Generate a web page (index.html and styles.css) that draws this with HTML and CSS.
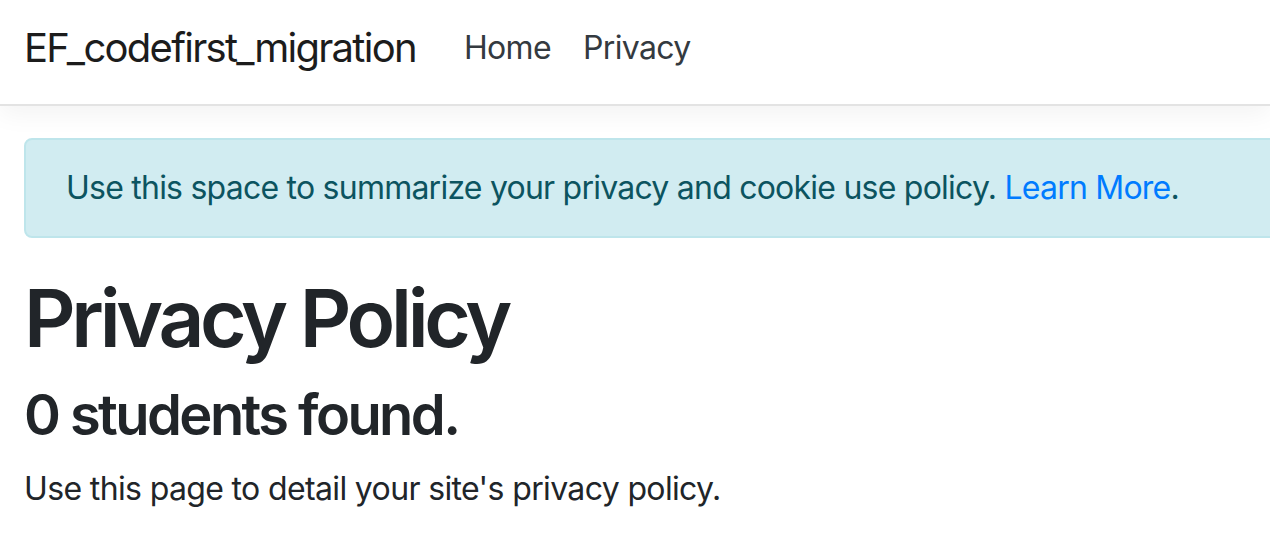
FILE: index.html
```html
<!DOCTYPE html>
<html lang="en">
<head>
<meta charset="utf-8">
<title>Privacy Policy - EF_codefirst_migration</title>
<link rel="stylesheet" href="styles.css">
</head>
<body>
<header class="site-header">
  <nav class="navbar">
    <a class="brand" href="#">EF_codefirst_migration</a>
    <ul class="nav-list">
      <li><a class="nav-link" href="#">Home</a></li>
      <li><a class="nav-link" href="#">Privacy</a></li>
    </ul>
  </nav>
</header>
<div class="container">
  <div class="alert">
    Use this space to summarize your privacy and cookie use policy. <a class="alert-link" href="#">Learn More</a>.
  </div>
  <main>
    <h1 class="title">Privacy Policy</h1>
    <h3 class="subtitle">0 students found.</h3>
    <p class="text">Use this page to detail your site's privacy policy.</p>
  </main>
</div>
</body>
</html>
```
FILE: styles.css
```css
html, body {
  margin: 0;
  padding: 0;
  overflow: hidden;
  background: #fff;
}
body {
  font-family: Inter, "Noto Sans", sans-serif;
  color: #212529;
  width: 1270px;
}
a { text-decoration: none; }

.site-header {
  border-bottom: 2px solid #e3e3e3;
  box-shadow: 0 8px 24px rgba(0, 0, 0, 0.05);
  background: #fff;
}
.navbar {
  display: flex;
  align-items: center;
  height: 96px;
  padding: 0 24px 8px;
}
.brand {
  font-size: 40px;
  line-height: 60px;
  letter-spacing: -0.043em;
  color: #1c1c1c;
  margin-right: 32px;
}
.nav-list {
  display: flex;
  list-style: none;
  margin: 0;
  padding: 0;
}
.nav-link {
  display: block;
  font-size: 32px;
  line-height: 48px;
  letter-spacing: -0.02em;
  padding: 0 16px;
  color: #343a40;
}

.container {
  padding: 32px 0 0 24px;
  width: 1400px;
}
.alert {
  background: #d1ecf1;
  border: 2px solid #bee5eb;
  border-radius: 8px;
  color: #0c5460;
  font-size: 32px;
  line-height: 48px;
  letter-spacing: -0.024em;
  padding: 24px 40px;
  margin-bottom: 32px;
}
.alert-link { color: #007bff; }

.title {
  font-size: 80px;
  font-weight: 600;
  line-height: 96px;
  letter-spacing: -0.053em;
  margin: 0 0 16px;
}
.subtitle {
  font-size: 56px;
  font-weight: 600;
  line-height: 67px;
  letter-spacing: -0.046em;
  margin: 0 0 16px;
}
.text {
  font-size: 32px;
  line-height: 48px;
  letter-spacing: -0.02em;
  margin: 0;
}
```
